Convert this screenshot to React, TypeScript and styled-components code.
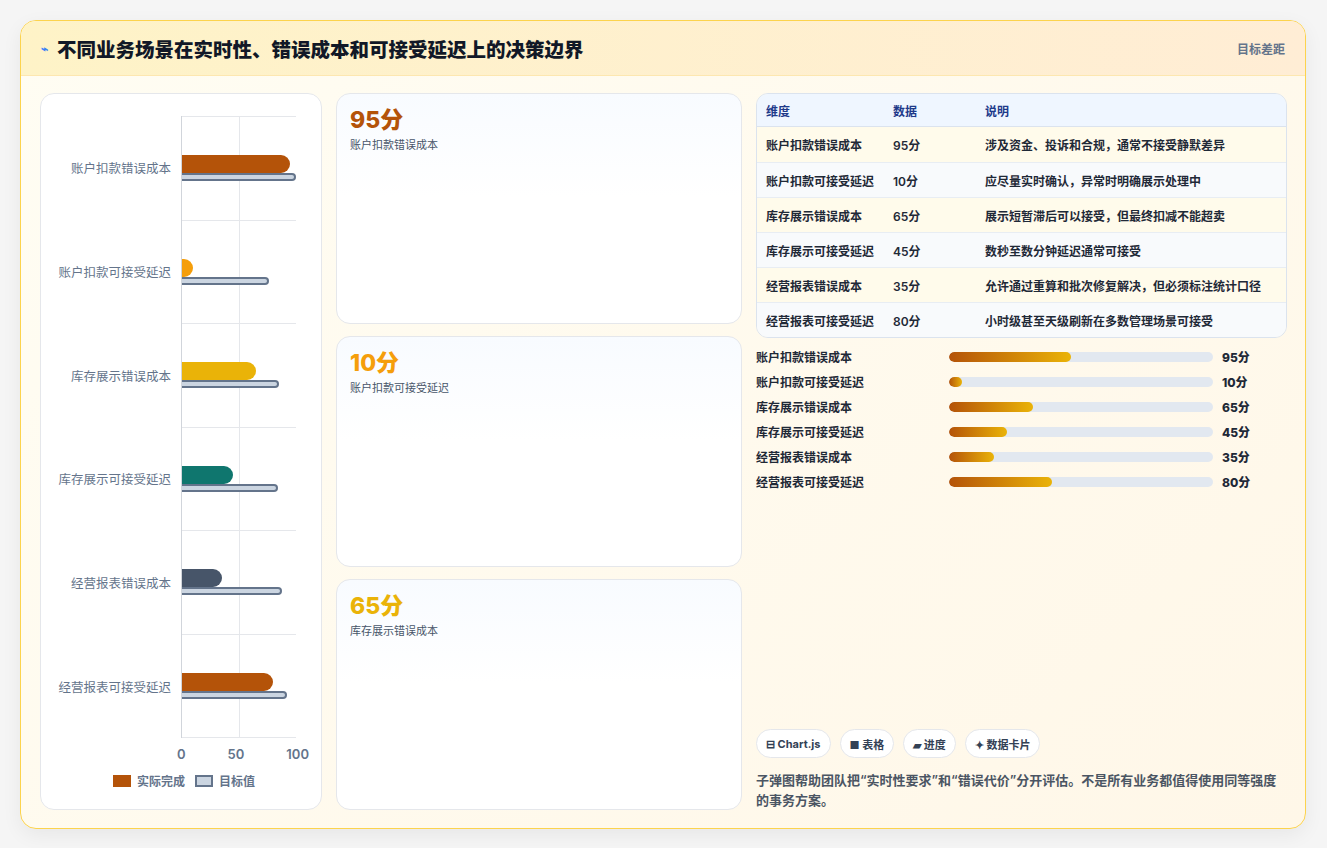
import React from "react";
import styled, { createGlobalStyle } from "styled-components";

const G = createGlobalStyle`
  body { margin: 0; background: #f3f4f6; font-family: Inter, "Noto Sans CJK SC", sans-serif; }
  * { box-sizing: border-box; }
`;

const Page = styled.div`
  width: 1327px; height: 848px; padding: 20px 21px 19px 20px; background: #f5f5f5;
`;
const Frame = styled.div`
  height: 100%; border: 1px solid #fcd34d; border-radius: 16px; overflow: hidden;
  background: linear-gradient(135deg, #fffdf3, #fff7e8); display: flex; flex-direction: column;
  box-shadow: 0 6px 20px rgba(0,0,0,0.06);
`;
const Header = styled.div`
  height: 55px; flex: none; display: flex; align-items: center; justify-content: space-between;
  padding: 0 20px; background: linear-gradient(90deg, #fef3c7, #ffedd5); border-bottom: 1px solid #fde7b0;
`;
const Title = styled.h1`
  margin: 0; font-size: 19.5px; font-weight: 800; color: #111827; display: flex; align-items: center; gap: 9px;
`;
const Icon = styled.span` font-size: 12px; color: #3b82f6; `;
const HeaderRight = styled.span` font-size: 12px; color: #64748b; font-weight: 600; `;
const Body = styled.div`
  flex: 1; display: grid; grid-template-columns: 282px 406px 1fr; gap: 14px 14px;
  padding: 17px 18px 18px 19px; min-height: 0;
`;
const Card = styled.div`
  background: #fff; border: 1px solid #e5e7eb; border-radius: 14px;
`;
const ChartCard = styled(Card)` padding: 22px 14px 20px 10px; display: flex; flex-direction: column; `;
const Plot = styled.div` flex: 1; display: grid; grid-template-columns: 130px 1fr; `;
const Labels = styled.div` display: flex; flex-direction: column; `;
const Label = styled.div`
  flex: 1; display: flex; align-items: center; justify-content: flex-end; padding-right: 10px;
  font-size: 12.5px; color: #64748b; white-space: nowrap;
`;
const Area = styled.div`
  position: relative; border-left: 1px solid #d1d5db; width: 115px;
  background-image: linear-gradient(90deg, transparent 57px, #e5e7eb 57px, #e5e7eb 58px, transparent 58px);
  display: flex; flex-direction: column;
`;
const Row = styled.div`
  flex: 1; border-top: 1px solid #e5e7eb; display: flex; flex-direction: column; justify-content: center;
  &:last-child { border-bottom: 1px solid #e5e7eb; }
`;
const Actual = styled.div<{ $c: string }>`
  height: 18px; background: ${p => p.$c}; border-radius: 0 9px 9px 0;
`;
const Target = styled.div`
  height: 8px; background: #cbd5e1; border: 2px solid #64748b; border-left: none; border-radius: 0 4px 4px 0;
`;
const Axis = styled.div`
  display: flex; justify-content: space-between; margin-left: 126px; width: 132px; padding-top: 8px;
  font-size: 13px; font-weight: 600; color: #64748b;
`;
const Legend = styled.div`
  display: flex; justify-content: center; gap: 10px; margin-top: 10px; padding-left: 10px; font-size: 12px; color: #64748b; font-weight: 600;
`;
const LegItem = styled.span` display: flex; align-items: center; gap: 6px; `;
const Swatch = styled.span<{ $c: string; $b?: string }>`
  width: 18px; height: 12px; background: ${p => p.$c}; border: ${p => p.$b ? `2px solid ${p.$b}` : "none"};
`;

const Stats = styled.div` display: grid; grid-template-rows: repeat(3, 1fr); gap: 12px; `;
const StatCard = styled(Card)`
  padding: 12px 13px; background: linear-gradient(180deg, #f8fbff, #ffffff 45%);
`;
const Val = styled.div<{ $c: string }>` font-size: 23px; font-weight: 800; color: ${p => p.$c}; line-height: 28px; `;
const Sub = styled.div` font-size: 11px; color: #475569; margin-top: 2px; `;

const Right = styled.div` display: flex; flex-direction: column; `;
const Table = styled.table`
  width: 100%; border-collapse: separate; border-spacing: 0; border: 1px solid #dbe3ee; border-radius: 12px;
  overflow: hidden; font-size: 12px; font-weight: 600;
  th { background: #eff6ff; color: #1e3a8a; text-align: left; height: 33px; padding: 0 9px; border-bottom: 1px solid #dbe3ee; }
  td { color: #1f2937; height: 35px; padding: 0 9px; border-top: 1px solid #e8edf3; white-space: nowrap; }
  tbody tr:first-child td { border-top: none; }
  tbody tr:nth-child(odd) td { background: #fffbeb; }
  tbody tr:nth-child(even) td { background: #f8fafc; }
`;
const Bars = styled.div` display: flex; flex-direction: column; gap: 10px; margin-top: 10px; `;
const BarRow = styled.div`
  display: grid; grid-template-columns: 193px 264px 1fr; align-items: center; gap: 0;
  font-size: 12px; font-weight: 600; color: #1f2937; height: 15px;
`;
const Track = styled.div` height: 10px; border-radius: 5px; background: #e2e8f0; overflow: hidden; `;
const Fill = styled.div` height: 100%; border-radius: 5px; background: linear-gradient(90deg, #b45309, #eab308); `;
const BarVal = styled.span` padding-left: 9px; font-weight: 800; `;
const Chips = styled.div` margin-top: auto; display: flex; gap: 9px; `;
const Chip = styled.span`
  height: 29px; padding: 0 9px; border: 1px solid #e5e7eb; border-radius: 15px; background: #fff;
  display: flex; align-items: center; font-size: 11px; font-weight: 700; color: #334155;
`;
const Foot = styled.p`
  margin: 12px 0 0; font-size: 13px; line-height: 20px; color: #4b5563; font-weight: 600;
`;

const data = [
  { n: "账户扣款错误成本", v: 95, t: 100, c: "#b45309", d: "涉及资金、投诉和合规，通常不接受静默差异" },
  { n: "账户扣款可接受延迟", v: 10, t: 76, c: "#f59e0b", d: "应尽量实时确认，异常时明确展示处理中" },
  { n: "库存展示错误成本", v: 65, t: 85, c: "#eab308", d: "展示短暂滞后可以接受，但最终扣减不能超卖" },
  { n: "库存展示可接受延迟", v: 45, t: 84, c: "#0f766e", d: "数秒至数分钟延迟通常可接受" },
  { n: "经营报表错误成本", v: 35, t: 88, c: "#475569", d: "允许通过重算和批次修复解决，但必须标注统计口径" },
  { n: "经营报表可接受延迟", v: 80, t: 92, c: "#b45309", d: "小时级甚至天级刷新在多数管理场景可接受" },
];

export default function App() {
  return (
    <Page>
      <G />
      <Frame>
        <Header>
          <Title><Icon>⌁</Icon>不同业务场景在实时性、错误成本和可接受延迟上的决策边界</Title>
          <HeaderRight>目标差距</HeaderRight>
        </Header>
        <Body>
          <ChartCard>
            <Plot>
              <Labels>{data.map(d => <Label key={d.n}>{d.n}</Label>)}</Labels>
              <Area>
                {data.map(d => (
                  <Row key={d.n}>
                    <Actual $c={d.c} style={{ width: `${d.v}%` }} />
                    <Target style={{ width: `${d.t}%` }} />
                  </Row>
                ))}
              </Area>
            </Plot>
            <Axis><span>0</span><span>50</span><span>100</span></Axis>
            <Legend>
              <LegItem><Swatch $c="#b45309" />实际完成</LegItem>
              <LegItem><Swatch $c="#cbd5e1" $b="#64748b" />目标值</LegItem>
            </Legend>
          </ChartCard>
          <Stats>
            {data.slice(0, 3).map(d => (
              <StatCard key={d.n}><Val $c={d.c}>{d.v}分</Val><Sub>{d.n}</Sub></StatCard>
            ))}
          </Stats>
          <Right>
            <Table>
              <colgroup><col style={{ width: 127 }} /><col style={{ width: 92 }} /><col /></colgroup>
              <thead><tr><th>维度</th><th>数据</th><th>说明</th></tr></thead>
              <tbody>{data.map(d => <tr key={d.n}><td>{d.n}</td><td>{d.v}分</td><td>{d.d}</td></tr>)}</tbody>
            </Table>
            <Bars>
              {data.map(d => (
                <BarRow key={d.n}>
                  <span>{d.n}</span>
                  <Track><Fill style={{ width: `${(d.v / 205) * 100}%` }} /></Track>
                  <BarVal>{d.v}分</BarVal>
                </BarRow>
              ))}
            </Bars>
            <Chips>
              <Chip>⊟ Chart.js</Chip><Chip>■ 表格</Chip><Chip>▰ 进度</Chip><Chip>✦ 数据卡片</Chip>
            </Chips>
            <Foot>子弹图帮助团队把“实时性要求”和“错误代价”分开评估。不是所有业务都值得使用同等强度的事务方案。</Foot>
          </Right>
        </Body>
      </Frame>
    </Page>
  );
}
